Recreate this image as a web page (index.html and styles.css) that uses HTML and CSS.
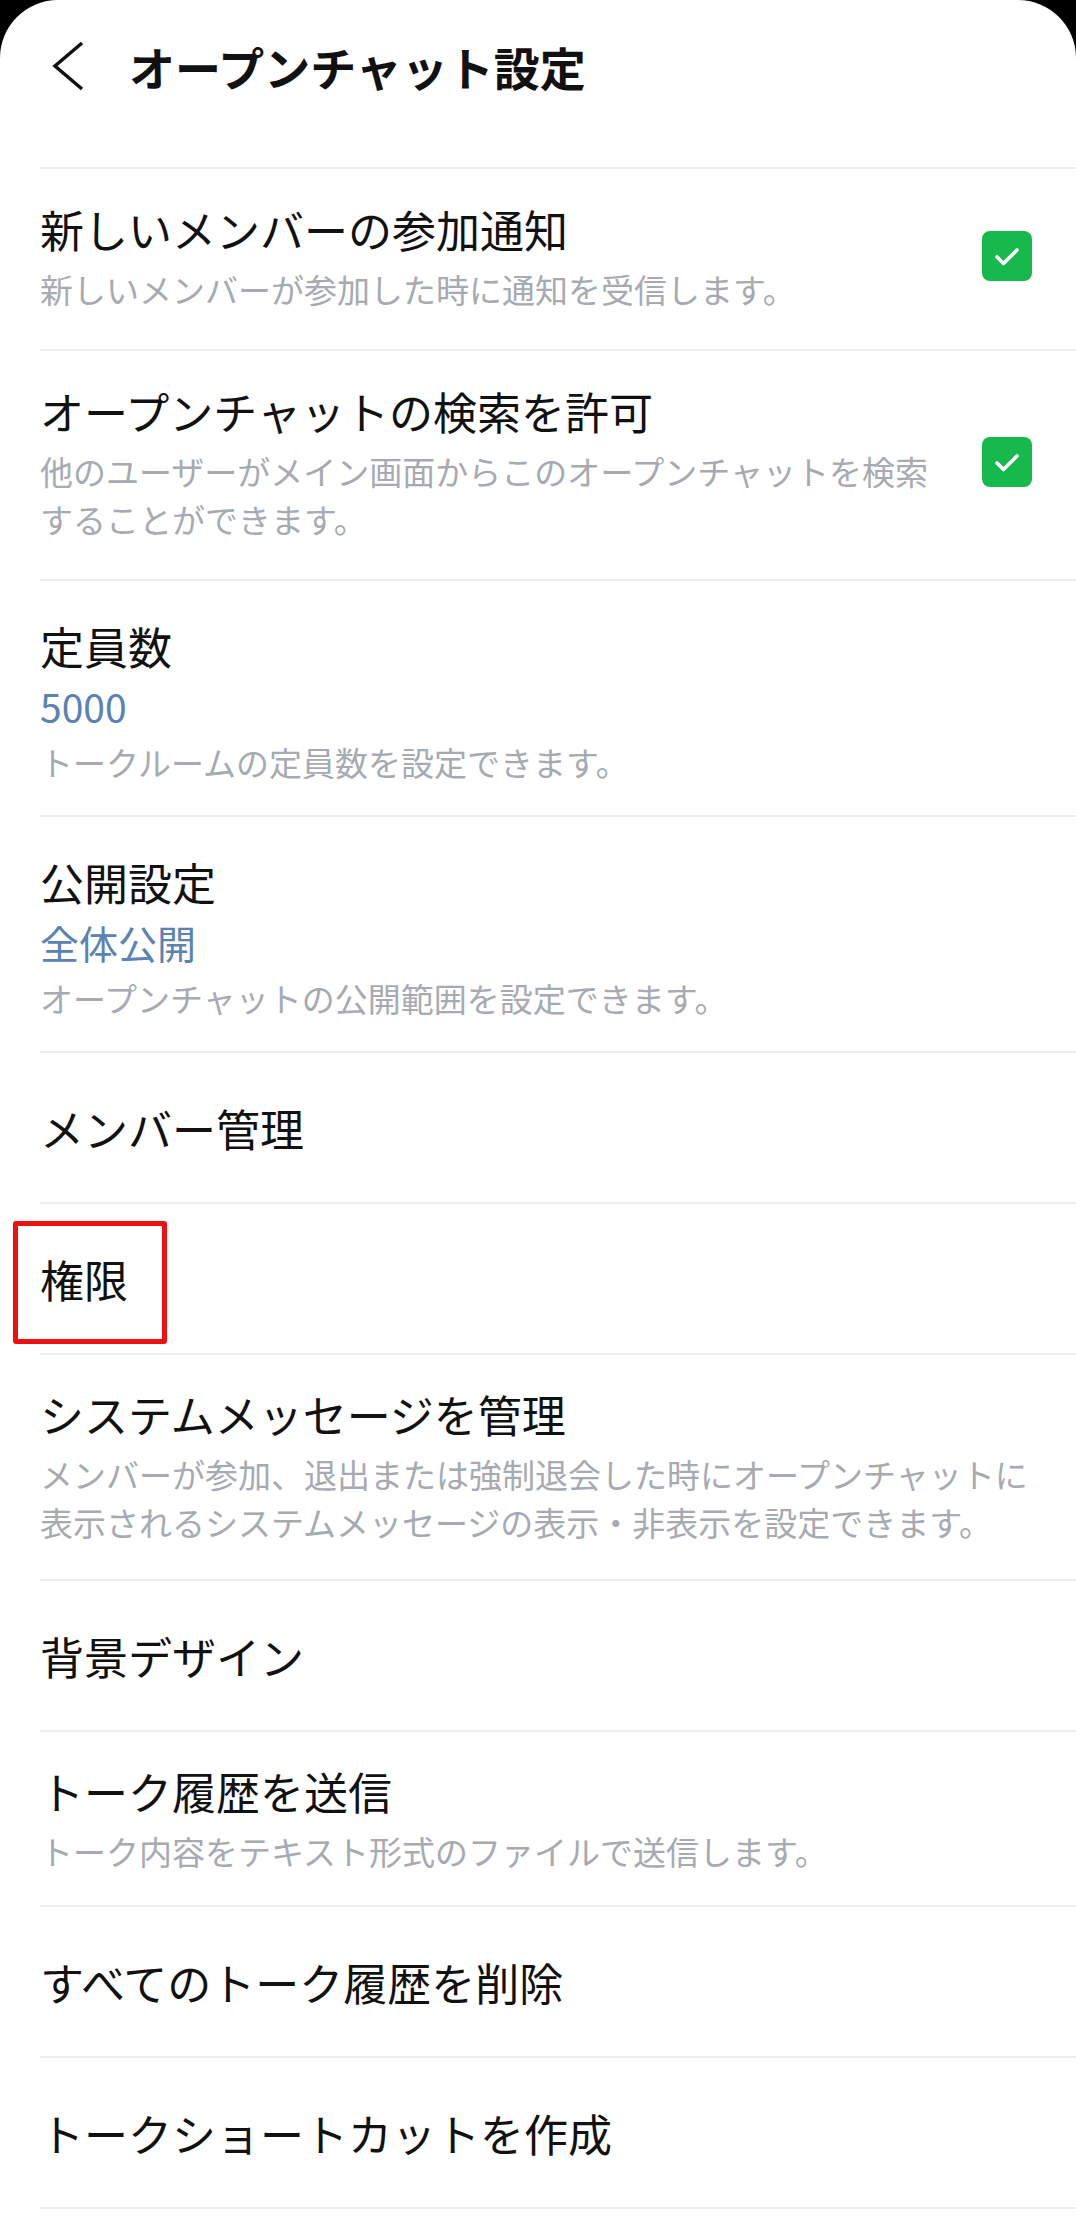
FILE: index.html
```html
<!DOCTYPE html>
<html lang="ja">
<head>
  <meta charset="UTF-8" />
  <meta name="viewport" content="width=device-width, initial-scale=1.0"/>
  <title>オープンチャット設定</title>
  <link rel="stylesheet" href="styles.css">
</head>
<body>

  <div class="screen">
    <div class="top-bar">
      <svg class="back" width="36" height="52" viewBox="0 0 36 52">
        <polyline points="31,3 4,26 31,49" fill="none" stroke="#111" stroke-width="3.5" stroke-linejoin="miter"/>
      </svg>
      <h1>オープンチャット設定</h1>
    </div>

    <div class="list">
      <div class="row has-sub">
        <div class="text">
          <div class="title">新しいメンバーの参加通知</div>
          <div class="sub">新しいメンバーが参加した時に通知を受信します。</div>
        </div>
        <span class="check"><svg width="50" height="50" viewBox="0 0 50 50"><polyline points="15,26 21.5,32.5 35,19" fill="none" stroke="#fff" stroke-width="3.6" stroke-linecap="round" stroke-linejoin="round"/></svg></span>
      </div>

      <div class="row has-sub">
        <div class="text">
          <div class="title">オープンチャットの検索を許可</div>
          <div class="sub">他のユーザーがメイン画面からこのオープンチャットを検索<br>することができます。</div>
        </div>
        <span class="check"><svg width="50" height="50" viewBox="0 0 50 50"><polyline points="15,26 21.5,32.5 35,19" fill="none" stroke="#fff" stroke-width="3.6" stroke-linecap="round" stroke-linejoin="round"/></svg></span>
      </div>

      <div class="row has-value">
        <div class="text">
          <div class="title">定員数</div>
          <div class="value">5000</div>
          <div class="sub">トークルームの定員数を設定できます。</div>
        </div>
      </div>

      <div class="row has-value">
        <div class="text">
          <div class="title">公開設定</div>
          <div class="value">全体公開</div>
          <div class="sub">オープンチャットの公開範囲を設定できます。</div>
        </div>
      </div>

      <div class="row">
        <div class="title">メンバー管理</div>
      </div>

      <div class="row marked">
        <div class="title">権限</div>
        <span class="mark"></span>
      </div>

      <div class="row has-sub mid">
        <div class="text">
          <div class="title">システムメッセージを管理</div>
          <div class="sub">メンバーが参加、退出または強制退会した時にオープンチャットに<br>表示されるシステムメッセージの表示・非表示を設定できます。</div>
        </div>
      </div>

      <div class="row">
        <div class="title">背景デザイン</div>
      </div>

      <div class="row has-sub tight">
        <div class="text">
          <div class="title">トーク履歴を送信</div>
          <div class="sub">トーク内容をテキスト形式のファイルで送信します。</div>
        </div>
      </div>

      <div class="row">
        <div class="title">すべてのトーク履歴を削除</div>
      </div>

      <div class="row last">
        <div class="title">トークショートカットを作成</div>
      </div>
    </div>
  </div>

</body>
</html>
```

FILE: styles.css
```css
body {
  margin: 0;
  background: #000;
  font-family: "Noto Sans CJK JP", "Noto Sans", sans-serif;
  color: #111;
}

.screen {
  background: #fff;
  border-radius: 58px 58px 0 0;
  min-height: 2240px;
  overflow: hidden;
}

.top-bar {
  height: 132px;
  display: flex;
  align-items: center;
  padding-left: 51px;
}

.top-bar .back {
  flex: none;
}

.top-bar h1 {
  margin: 0 0 0 42px;
  font-size: 46px;
  font-weight: 700;
  line-height: 60px;
}

.list {
  margin-top: 35px;
  margin-left: 40px;
}

.row {
  position: relative;
  display: flex;
  align-items: center;
  min-height: 149px;
  padding-right: 40px;
  border-top: 2px solid #eeeeee;
}

.row.last {
  border-bottom: 2px solid #eeeeee;
}

.row.has-sub {
  padding-top: 30px;
  padding-bottom: 36px;
  min-height: 0;
}

.row.has-sub.mid {
  padding-top: 29px;
  padding-bottom: 33px;
}

.row.has-sub.tight {
  padding-top: 29px;
  padding-bottom: 30px;
}

.row.has-value {
  padding-top: 35px;
  padding-bottom: 29px;
  min-height: 0;
}

.text {
  flex: 1;
}

.title {
  font-size: 44px;
  line-height: 60px;
  color: #111;
}

.value {
  font-size: 39px;
  line-height: 60px;
  color: #5a82b3;
}

.sub {
  margin-top: 6px;
  font-size: 33px;
  line-height: 48px;
  color: #a7aab1;
  white-space: nowrap;
}

.has-value .sub {
  margin-top: 2px;
}

.check {
  flex: none;
  width: 50px;
  height: 50px;
  margin-right: 4px;
  border-radius: 8px;
  background: #17b84c;
  display: flex;
}

/* red annotation frame drawn over the row */
.mark {
  position: absolute;
  left: -27px;
  top: 17px;
  width: 144px;
  height: 113px;
  border: 5px solid #ee1111;
  border-radius: 3px;
}
```
